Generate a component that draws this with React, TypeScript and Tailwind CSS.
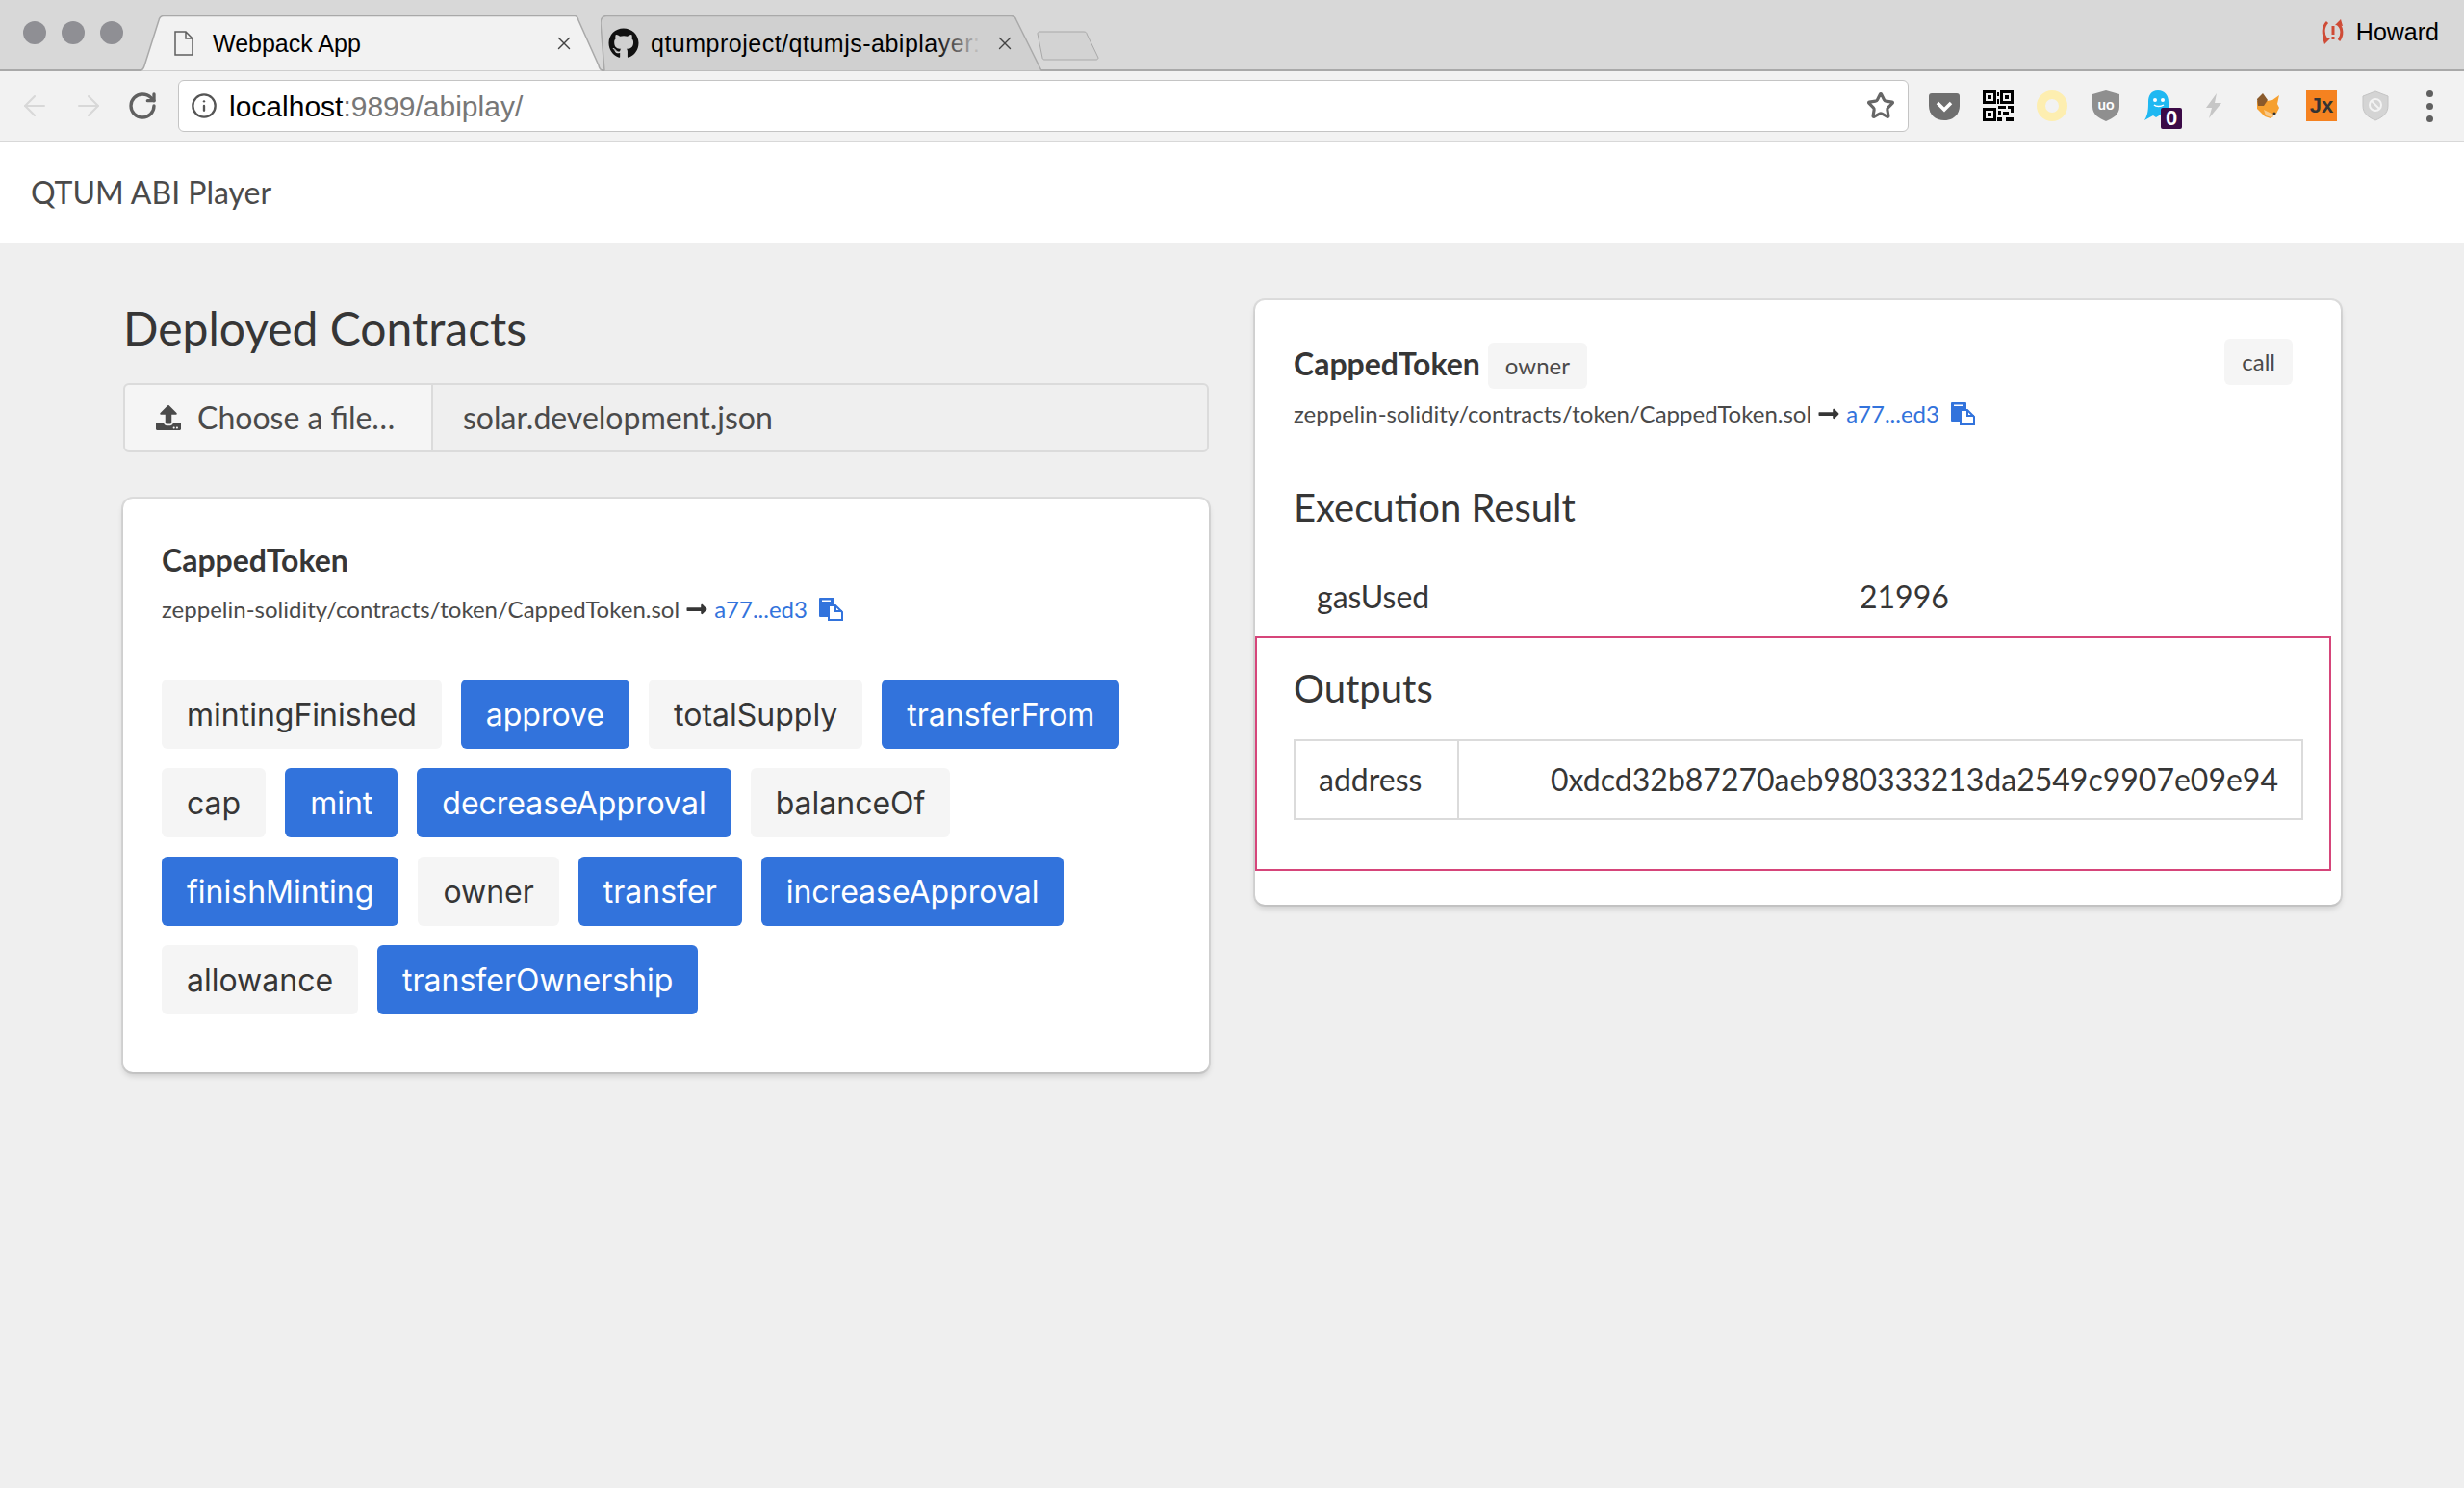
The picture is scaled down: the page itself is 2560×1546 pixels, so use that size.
import { FaGithub, FaLongArrowAltRight, FaUpload } from "react-icons/fa"
import { ArrowLeft, ArrowRight, Info, RotateCw, Star, X } from "lucide-react"

const methods = [
  { name: "mintingFinished", primary: false },
  { name: "approve", primary: true },
  { name: "totalSupply", primary: false },
  { name: "transferFrom", primary: true },
  { name: "cap", primary: false },
  { name: "mint", primary: true },
  { name: "decreaseApproval", primary: true },
  { name: "balanceOf", primary: false },
  { name: "finishMinting", primary: true },
  { name: "owner", primary: false },
  { name: "transfer", primary: true },
  { name: "increaseApproval", primary: true },
  { name: "allowance", primary: false },
  { name: "transferOwnership", primary: true },
]

const PasteIcon = () => (
  <svg viewBox="0 0 25 24" className="ml-3 h-[24px] w-[25px]">
    <path fill="#3273dc" d="M1 0h14a1 1 0 0 1 1 1v6H9v13H1a1 1 0 0 1-1-1V1a1 1 0 0 1 1-1z" />
    <rect x="3" y="2.500" width="9" height="1.500" fill="#fff" />
    <path fill="#fff" stroke="#3273dc" strokeWidth="2" d="M10 8h7l7 7v8H10z" />
    <path fill="#3273dc" d="M16 8h2v5h6v2h-8z" />
  </svg>
)

const ContractPath = () => (
  <div className="flex items-center text-[24px] leading-[30px] text-[#4a4a4a]">
    <span>zeppelin-solidity/contracts/token/CappedToken.sol</span>
    <FaLongArrowAltRight className="ml-[6px] mr-[6px] size-[24px] text-[#363636]" />
    <a className="text-[#3273dc]">a77...ed3</a>
    <PasteIcon />
  </div>
)

const QrIcon = () => (
  <svg viewBox="0 0 32 32" className="size-8 fill-black">
    <path fillRule="evenodd" d="M0 0h14v14H0zM3 3v8h8V3zM18 0h14v14H18zm3 3v8h8V3zM0 18h14v14H0zm3 3v8h8v-8z" />
    <path d="M5 5h4v4H5zM23 5h4v4h-4zM5 23h4v4H5zM15 2h2v4h-2zM15 9h2v5h-2zM16 16h8v3h-8zM26 16h6v7h-3v-4h-3zM16 21h3v5h-3zM21 22h6v4h-6zM15 28h5v4h-5zM24 28h8v4h-8z" />
  </svg>
)

const ExtensionBar = () => (
  <div className="flex">
    <div className="flex w-14 items-center justify-center">
      <svg viewBox="0 0 32 32" className="size-8">
        <path fill="#6f6f6f" d="M3 3h26a3 3 0 0 1 3 3v10c0 9-7 15-16 15S0 25 0 16V6a3 3 0 0 1 3-3z" />
        <path fill="none" stroke="#fff" strokeWidth="3.500" d="M9 13l7 7 7-7" />
      </svg>
    </div>
    <div className="flex w-14 items-center justify-center"><QrIcon /></div>
    <div className="flex w-14 items-center justify-center">
      <div className="size-8 rounded-full border-[9px] border-[#fdeeb0]" />
    </div>
    <div className="flex w-14 items-center justify-center">
      <svg viewBox="0 0 28 32" className="h-8 w-7">
        <path fill="#8f8f8f" d="M14 0l14 4v13c0 8-7 12-14 15C7 29 0 25 0 17V4z" />
        <text x="14" y="20" textAnchor="middle" fill="#fff" fontSize="15" fontWeight="700" fontFamily="Lato">uo</text>
      </svg>
    </div>
    <div className="relative flex w-14 items-center justify-center">
      <svg viewBox="0 0 28 32" className="-ml-[5px] h-8 w-7">
        <path fill="#1fb8f2" d="M14 0c7 0 11 5 11 12v16l-8-3-5 3-3-2-9 5c4-6 4-13 4-19C4 5 7 0 14 0z" />
        <circle cx="11" cy="10" r="2" fill="#fff" />
        <circle cx="19" cy="10" r="2" fill="#fff" />
        <path fill="none" stroke="#fff" strokeWidth="1.500" d="M10 15c2 2 7 2 10 0" />
      </svg>
      <span className="absolute bottom-[-7px] left-[29px] flex h-[22px] w-[22px] items-center justify-center rounded-[2px] bg-[#3c0a47] text-[22px] font-bold leading-none text-white">0</span>
    </div>
    <div className="flex w-14 items-center justify-center">
      <svg viewBox="0 0 16 26" className="h-[26px] w-4 fill-[#c6c6c6]">
        <path d="M11 0L0 15h6l-3 11L16 10H9z" />
      </svg>
    </div>
    <div className="flex w-14 items-center justify-center">
      <svg viewBox="0 0 26 26" className="size-[26px]">
        <path fill="#f6a030" d="M2 8l10 0 6-1 7-5-2 9 2 4-3 6-4 1 1 2-3 2-6-2-8-8z" />
        <path fill="#8a5a2b" d="M3 13L2 6l6-6 5 7-4 6z" />
        <path fill="#f8c98a" d="M9 17l6 3 5 2-3 3-6-2z" />
        <circle cx="20" cy="21" r="1.500" fill="#333" />
      </svg>
    </div>
    <div className="flex w-14 items-center justify-center">
      <span className="flex size-8 items-center justify-center bg-[#f58220] text-[22px] font-bold leading-none text-[#333]">Jx</span>
    </div>
    <div className="flex w-14 items-center justify-center">
      <svg viewBox="0 0 28 32" className="h-8 w-7">
        <path fill="#d4d4d4" stroke="#c4c4c4" d="M14 1l13 5v10c0 8-6 12-13 15C7 28 1 24 1 16V6z" />
        <circle cx="14" cy="15" r="6" fill="none" stroke="#f3f3f3" strokeWidth="2" />
        <path stroke="#f3f3f3" strokeWidth="2" d="M10 11l8 8" />
      </svg>
    </div>
    <div className="flex w-14 flex-col items-center justify-center gap-[6px]">
      <span className="size-[7px] rounded-full bg-[#606060]" />
      <span className="size-[7px] rounded-full bg-[#606060]" />
      <span className="size-[7px] rounded-full bg-[#606060]" />
    </div>
  </div>
)

const BrowserChrome = () => (
  <div className="font-['Liberation_Sans',sans-serif]">
    <div className="flex h-[74px] items-end border-b-2 border-[#a9a9a9] bg-[#d8d8d8] pl-[24px]">
      <div className="mb-[26px] mr-[17px] flex gap-[16px]">
        <span className="size-[24px] rounded-full bg-[#8f8f94]" />
        <span className="size-[24px] rounded-full bg-[#8f8f94]" />
        <span className="size-[24px] rounded-full bg-[#8f8f94]" />
      </div>
      <div className="relative -mb-[2px] flex h-[58px] w-[482px] items-center pl-[36px] pr-[30px]">
        <svg viewBox="0 0 482 58" preserveAspectRatio="none" className="absolute inset-0 size-full">
          <path d="M0 57.500c3 0 4-2 5-5L20 5q1-4.500 5-4.500h427q3 0 4 4.500l21 47q1 5 5 5.500" fill="#f2f2f2" stroke="#a9a9a9" strokeWidth="1.500" />
        </svg>
        <svg viewBox="0 0 20 26" className="relative mr-[20px] h-[26px] w-[20px] fill-none stroke-[#5f5f5f] stroke-[1.500]">
          <path d="M1 1h11l7 7v17H1zM12 1v7h7" />
        </svg>
        <span className="relative flex-1 pt-[2px] text-[25px] text-black">Webpack App</span>
        <X className="relative size-[22px] text-[#444]" strokeWidth={1.500} />
      </div>
      <div className="relative -mb-[2px] -ml-[3px] flex h-[58px] w-[459px] items-center pl-[8px]">
        <svg viewBox="0 0 459 58" preserveAspectRatio="none" className="absolute inset-0 size-full">
          <path d="M4 57.500L0 8c0-4 2-7.500 6-7.500h420c3 0 5 1.500 6 4.500l26 52.500" fill="#d0d0d0" stroke="#a9a9a9" strokeWidth="1.500" />
        </svg>
        <FaGithub className="relative mr-[12px] size-[32px] shrink-0 text-[#111]" />
        <span className="relative w-[344px] flex-none overflow-hidden whitespace-nowrap pt-[2px] text-[25px] tracking-[0.5px] text-black">
          qtumproject/qtumjs-abiplayer:
          <span className="absolute inset-y-0 right-0 w-[50px] bg-gradient-to-r from-transparent to-[#d0d0d0]" />
        </span>
        <X className="relative ml-[13px] size-[22px] shrink-0 text-[#444]" strokeWidth={1.500} />
      </div>
      <svg viewBox="0 0 66 31" className="relative mb-[9px] -ml-[6px] h-[31px] w-[66px] fill-[#d3d3d3] stroke-[#a9a9a9]">
        <path d="M1 3c0-1 1-2 2-2h46c2 0 3 1 3 2l12 25c0 1-1 2-2 2H8c-1 0-2-1-2-2z" />
      </svg>
      <div className="mb-[20px] ml-auto flex items-center pr-[26px]">
        <svg viewBox="0 0 28 28" className="mr-[10px] size-[28px] fill-none stroke-[#cf4b36] stroke-[3]">
          <path d="M8 4C3 9 3 17 7 22M19 6c5 4 5 12 1 17" />
          <path d="M14 8v9M14 19v3" />
          <path fill="#cf4b36" stroke="none" d="M3 20l8 1-6 6zM24 8l-8-1 6-6z" />
        </svg>
        <span className="text-[25px] text-black">Howard</span>
      </div>
    </div>
    <div className="flex h-[74px] items-center border-b-2 border-[#d8d8d8] bg-[#f2f2f2] pl-[19px]">
      <div className="flex w-[166px] shrink-0 items-center gap-[22px]">
        <ArrowLeft className="size-[34px] text-[#d8d8d8]" strokeWidth={1.500} />
        <ArrowRight className="size-[34px] text-[#d8d8d8]" strokeWidth={1.500} />
        <RotateCw className="ml-[1px] size-[32px] text-[#606060]" strokeWidth={2.500} />
      </div>
      <div className="flex h-[54px] w-[1798px] shrink-0 items-center rounded-[6px] border border-[#c4c4c4] bg-white pl-[12px] pr-[13px] text-[30px]">
        <Info className="mr-[12px] size-[28px] text-[#555]" strokeWidth={2} />
        <span className="text-black">localhost</span>
        <span className="flex-1 text-[#777]">:9899/abiplay/</span>
        <Star className="size-[30px] text-[#666]" strokeWidth={2.500} />
      </div>
      <div className="ml-[9px]">
        <ExtensionBar />
      </div>
    </div>
  </div>
)

const ContractsPanel = () => (
  <div className="w-[1128px]">
    <h1 className="-mt-[3px] mb-[25px] text-[48px] leading-[64px] text-[#363636]">Deployed Contracts</h1>
    <div className="mb-[48px] flex h-[72px] rounded-[6px] border-2 border-[#dbdbdb] text-[32px] text-[#4a4a4a]">
      <div className="flex w-[320px] items-center rounded-l-[5px] border-r-2 border-[#dbdbdb] bg-[#f5f5f5] pl-[32px]">
        <FaUpload className="mr-[17px] size-[26px]" />
        Choose a file…
      </div>
      <div className="flex flex-1 items-center pl-[31px]">solar.development.json</div>
    </div>
    <div className="rounded-[10px] bg-white px-[40px] pb-[60px] pt-[44px] shadow-[0_4px_6px_rgba(10,10,10,0.15),0_0_0_2px_rgba(10,10,10,0.08)]">
      <h2 className="text-[32px] font-bold leading-[40px] text-[#363636]">CappedToken</h2>
      <div className="mt-[16px]">
        <ContractPath />
      </div>
      <div className="mt-[58px] flex flex-wrap gap-[20px] font-['Inter',sans-serif]">
        {methods.map((m) => (
          <span
            key={m.name}
            className={
              m.primary
                ? "flex h-[72px] items-center rounded-[6px] bg-[#3273dc] px-[26px] pt-[2px] text-[32px] text-white"
                : "flex h-[72px] items-center rounded-[6px] bg-[#f5f5f5] px-[26px] pt-[2px] text-[32px] text-[#363636]"
            }
          >
            {m.name}
          </span>
        ))}
      </div>
    </div>
  </div>
)

const ResultPanel = () => (
  <div className="h-[628px] w-[1128px] rounded-[10px] bg-white pt-[40px] text-[#363636] shadow-[0_4px_6px_rgba(10,10,10,0.15),0_0_0_2px_rgba(10,10,10,0.08)]">
    <div className="flex items-center pl-[40px] pr-[50px]">
      <h2 className="text-[32px] font-bold leading-[40px]">CappedToken</h2>
      <span className="ml-[8px] mt-[4px] flex h-[48px] items-center rounded-[6px] bg-[#f5f5f5] px-[18px] text-[24px] text-[#4a4a4a]">owner</span>
      <span className="ml-auto -mt-[4px] flex h-[48px] items-center rounded-[6px] bg-[#f5f5f5] px-[18px] text-[24px] text-[#4a4a4a]">call</span>
    </div>
    <div className="mt-[11px] pl-[40px]">
      <ContractPath />
    </div>
    <h3 className="mt-[54px] pl-[40px] text-[40px] leading-[56px]">Execution Result</h3>
    <div className="mt-[45px] flex pl-[64px] text-[32px] leading-[40px]">
      <span className="w-[564px]">gasUsed</span>
      <span>21996</span>
    </div>
    <div className="mr-[10px] mt-[21px] h-[244px] border-2 border-[#d6457a] pl-[38px] pr-[27px] pt-[24px]">
      <h3 className="text-[40px] leading-[56px]">Outputs</h3>
      <div className="mt-[25px] flex h-[84px] items-center border-2 border-[#dbdbdb] text-[32px]">
        <span className="flex h-full w-[170px] items-center border-r-2 border-[#dbdbdb] pl-[24px]">address</span>
        <span className="flex-1 pr-[24px] text-right">0xdcd32b87270aeb980333213da2549c9907e09e94</span>
      </div>
    </div>
  </div>
)

const App = () => {
  return (
    <div className="flex h-[1546px] w-[2560px] flex-col overflow-hidden bg-[#efefef] font-['Lato',sans-serif]">
      <BrowserChrome />
      <div className="flex h-[104px] items-center bg-white pl-[32px] text-[32px] text-[#4a4a4a]">QTUM ABI Player</div>
      <div className="flex gap-[48px] pl-[128px] pt-[60px]">
        <ContractsPanel />
        <ResultPanel />
      </div>
    </div>
  )
}

export default App
